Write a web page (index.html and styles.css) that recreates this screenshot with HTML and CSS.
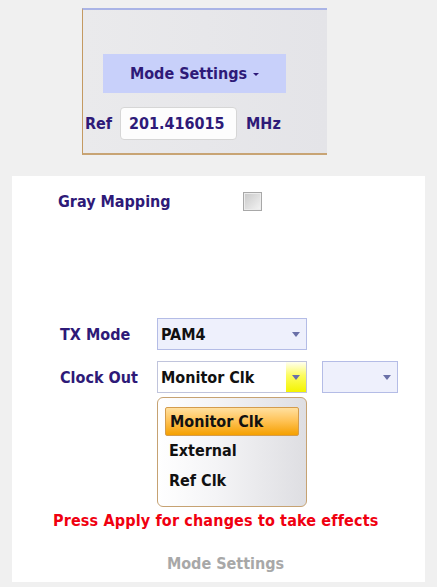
FILE: index.html
```html
<!DOCTYPE html>
<html>
<head>
<meta charset="utf-8">
<link rel="stylesheet" href="styles.css">
</head>
<body>
<div class="top-panel">
  <div class="mode-btn">Mode Settings <span class="caret"></span></div>
  <div class="ref-row">
    <span class="ref-label">Ref</span>
    <div class="ref-input"><span>201.416015</span></div>
    <span class="unit">MHz</span>
  </div>
</div>
<div class="panel">
  <div class="row gray-row">
    <span class="label">Gray Mapping</span>
    <span class="checkbox"></span>
  </div>
  <div class="row tx-row">
    <span class="label">TX Mode</span>
    <div class="combo lav"><span class="val">PAM4</span><span class="btn"><span class="arrow"></span></span></div>
  </div>
  <div class="row clk-row">
    <span class="label">Clock Out</span>
    <div class="combo white">
      <span class="val">Monitor Clk</span><span class="btn hot"><span class="arrow"></span></span>
      <div class="popup">
        <div class="item sel">Monitor Clk</div>
        <div class="item">External</div>
        <div class="item">Ref Clk</div>
      </div>
    </div>
    <div class="combo lav small"><span class="val"></span><span class="btn"><span class="arrow"></span></span></div>
  </div>
  <div class="warn">Press Apply for changes to take effects</div>
  <div class="caption">Mode Settings</div>
</div>
</body>
</html>
```
FILE: styles.css
```css
html, body { margin: 0; padding: 0; }
body {
  background: #f0f0f0;
  width: 437px;
  height: 587px;
  overflow: hidden;
  font-family: "DejaVu Sans Condensed", "DejaVu Sans", sans-serif;
  font-weight: bold;
  font-size: 16px;
  color: #2e1a78;
}
.top-panel {
  margin: 8px 0 0 82px;
  width: 244px;
  height: 143px;
  border-top: 2px solid #aab4e6;
  border-left: 1px solid #c49a62;
  border-bottom: 2px solid #c8a474;
  background: linear-gradient(90deg, #eaeaec, #e4e4e8);
  box-sizing: content-box;
}
.mode-btn {
  margin: 44px 0 0 20px;
  width: 183px;
  height: 39px;
  background: #c8d0fa;
  display: flex;
  align-items: center;
  justify-content: center;
  gap: 6px;
}
.caret {
  width: 0; height: 0;
  border-left: 3px solid transparent;
  border-right: 3px solid transparent;
  border-top: 3px solid #2e1a78;
  margin-top: 2px;
}
.ref-row {
  display: flex;
  align-items: center;
  margin-top: 14px;
  padding-left: 2px;
}
.ref-label { width: 35px; }
.ref-input {
  width: 117px;
  height: 33px;
  border: 1px solid #d6d6d6;
  border-radius: 4px;
  background: #fdfdfd;
  display: flex;
  align-items: center;
  padding-left: 8px;
  box-sizing: border-box;
  overflow: hidden;
  white-space: nowrap;
}
.unit { margin-left: 9px; }

.panel {
  margin: 21px 0 0 12px;
  width: 413px;
  height: 406px;
  background: #fff;
  box-sizing: border-box;
  padding-top: 15px;
}
.row { display: flex; align-items: center; }
.gray-row { padding-left: 46px; height: 20px; }
.gray-row .label { width: 185px; }
.checkbox {
  width: 17px; height: 17px;
  border: 1px solid #a8a8a8;
  background: linear-gradient(135deg, #c8c8c8, #f4f4f4);
  box-shadow: inset 0 0 0 1px #ececec;
}
.tx-row { margin-top: 107px; padding-left: 48px; }
.clk-row { margin-top: 11px; padding-left: 48px; }
.tx-row .label, .clk-row .label { width: 97px; }
.combo {
  position: relative;
  width: 150px;
  height: 32px;
  box-sizing: border-box;
  border: 1px solid #b4bce6;
  display: flex;
  align-items: center;
  color: #111;
}
.combo.lav { background: #eef0fc; }
.combo.white { background: #fff; border-color: #c0c4dc; }
.combo.small { width: 76px; margin-left: 15px; }
.val { flex: 1; padding-left: 3px; white-space: nowrap; }
.btn {
  width: 20px;
  align-self: stretch;
  display: flex;
  align-items: center;
  justify-content: center;
}
.btn.hot { background: linear-gradient(180deg, #fffff0 0%, #fcfc60 45%, #f4f400 100%); }
.arrow {
  width: 0; height: 0;
  border-left: 4px solid transparent;
  border-right: 4px solid transparent;
  border-top: 5px solid #6a70a8;
}
.popup {
  position: absolute;
  left: -1px;
  top: 35px;
  width: 150px;
  height: 110px;
  box-sizing: border-box;
  border: 1px solid #c6a272;
  border-radius: 6px;
  background: linear-gradient(90deg, #ffffff 0%, #f4f4f6 40%, #dedee2 100%);
  padding: 9px 7px 0 7px;
}
.item {
  height: 30px;
  line-height: 29px;
  padding-left: 4px;
  color: #111;
}
.item.sel {
  height: 29px;
  box-sizing: border-box;
  line-height: 27px;
  border: 1px solid #d49c4c;
  border-radius: 2px;
  background: linear-gradient(180deg, #ffe0a0 0%, #ffc45a 45%, #f5a000 100%);
}
.warn {
  margin-top: 118px;
  padding-left: 41px;
  color: #f00010;
  letter-spacing: 0.15px;
}
.caption {
  margin-top: 24px;
  text-align: center;
  padding-left: 14px;
  color: #a8a8a8;
}
```
